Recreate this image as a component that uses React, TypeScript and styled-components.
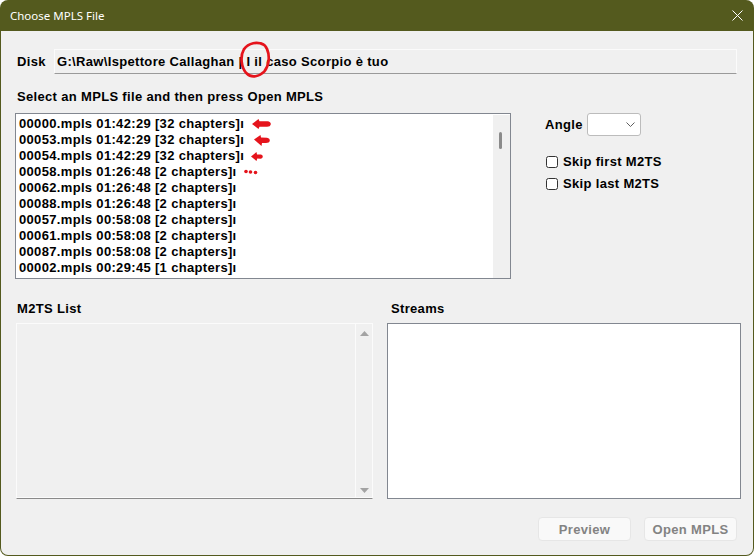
import React from "react";
import styled, { createGlobalStyle } from "styled-components";

const OLIVE = "#545a1e";
const RED = "#e5141c";

const GlobalStyle = createGlobalStyle`
  html, body { margin: 0; padding: 0; background: #ffffff; }
  body { font-family: "Liberation Sans", Arial, sans-serif; }
  * { box-sizing: border-box; }
`;

const Window = styled.div`
  width: 754px;
  height: 556px;
  display: flex;
  flex-direction: column;
  background: ${OLIVE};
  border-radius: 8px;
  overflow: hidden;
  padding: 0 1px 1px 1px;
`;

const TitleBar = styled.div`
  height: 31px;
  flex-shrink: 0;
  display: flex;
  align-items: center;
  justify-content: space-between;
  padding: 0 9px 0 9px;
  color: #ffffff;
  font-family: "Noto Sans", "Liberation Sans", sans-serif;
  font-size: 11.5px;
`;

const CloseIcon = styled.svg`
  width: 11px;
  height: 11px;
  margin-right: 1px;
`;

const Body = styled.div`
  flex: 1;
  background: #f0f0f0;
  border-radius: 0 0 7px 7px;
  padding: 18px 16px 0 14px;
  display: flex;
  flex-direction: column;
  font-family: "Liberation Sans", Arial, sans-serif;
  font-weight: bold;
  font-size: 13px;
  letter-spacing: 0.33px;
  color: #000;
`;

const DiskRow = styled.div`
  position: relative;
  display: flex;
  align-items: center;
  height: 25px;
`;

const DiskLabel = styled.span`
  width: 39px;
  padding-left: 2px;
  line-height: 16px;
`;

const ReadOnlyField = styled.div`
  flex: 1;
  height: 25px;
  display: flex;
  align-items: center;
  padding-left: 2px;
  background: #f0f0f0;
  border: 1px solid #fbfbfb;
  border-bottom: 1px solid #9a9a9a;
  white-space: pre;
`;

const CircleMark = styled.svg`
  position: absolute;
  left: 225px;
  top: -8px;
  width: 31px;
  height: 38px;
  pointer-events: none;
`;

const SectionLabel = styled.div<{ $top: number }>`
  margin-top: ${(p) => p.$top}px;
  padding-left: 2px;
  line-height: 16px;
  height: 16px;
`;

const TopRow = styled.div`
  display: flex;
  margin-top: 8px;
`;

const ListBox = styled.div`
  width: 496px;
  height: 166px;
  flex-shrink: 0;
  border: 1px solid #828790;
  background: #ffffff;
  display: flex;
`;

const ListItems = styled.div`
  flex: 1;
  padding: 2px 0 0 3px;
  overflow: hidden;
`;

const Row = styled.div`
  height: 16px;
  line-height: 16px;
  display: flex;
  align-items: center;
  white-space: nowrap;
`;

const Mark = styled.svg<{ $gap: number }>`
  margin-left: ${(p) => p.$gap}px;
  flex-shrink: 0;
`;

const ScrollTrack = styled.div`
  width: 17px;
  margin: 1px 0 0 0;
  height: 163px;
  background: #f0f0f0;
  padding: 17px 0 0 6px;
`;

const Thumb = styled.div`
  width: 3px;
  height: 17px;
  border-radius: 2px;
  background: #8b8b8b;
`;

const SidePanel = styled.div`
  margin-left: 34px;
  display: flex;
  flex-direction: column;
`;

const AngleRow = styled.div`
  display: flex;
  align-items: center;
  height: 23px;
`;

const AngleLabel = styled.span`
  width: 42px;
  line-height: 16px;
`;

const Combo = styled.div`
  width: 54px;
  height: 23px;
  background: #ffffff;
  border: 1px solid #bcbcbc;
  border-radius: 3px;
  display: flex;
  align-items: center;
  justify-content: flex-end;
  padding-right: 5px;
`;

const CheckList = styled.div`
  display: flex;
  flex-direction: column;
  gap: 6px;
  margin-top: 18px;
`;

const CheckRow = styled.label`
  display: flex;
  align-items: center;
  height: 16px;
  line-height: 16px;
`;

const CheckBox = styled.span`
  width: 12px;
  height: 12px;
  border: 1px solid #333333;
  border-radius: 2.5px;
  background: #ffffff;
  margin: 0 5px 0 1px;
`;

const LabelRow = styled.div`
  display: flex;
  margin-top: 22px;
  height: 16px;
  line-height: 16px;
`;

const LabelCell = styled.span<{ $width: number }>`
  width: ${(p) => p.$width}px;
  padding-left: 2px;
`;

const BottomRow = styled.div`
  display: flex;
  margin-top: 6px;
  gap: 14px;
`;

const DisabledList = styled.div`
  width: 357px;
  height: 176px;
  margin-left: 1px;
  flex-shrink: 0;
  display: flex;
  background: #f0f0f0;
  border: 1px solid #fbfbfb;
  border-bottom: 1px solid #8a8a8a;
  box-shadow: inset 0 -1px 0 #fbfbfb;
`;

const DisabledScroll = styled.div`
  margin-left: auto;
  width: 17px;
  border-left: 1px solid #fbfbfb;
  display: flex;
  flex-direction: column;
  justify-content: space-between;
  align-items: center;
  padding: 7px 0 5px 0;
`;

const StreamsBox = styled.div`
  width: 354px;
  height: 176px;
  flex-shrink: 0;
  background: #ffffff;
  border: 1px solid #828790;
`;

const ButtonRow = styled.div`
  display: flex;
  justify-content: flex-end;
  gap: 13px;
  margin-top: 18px;
`;

const Button = styled.button`
  width: 93px;
  height: 24px;
  background: #f9f9f9;
  border: 1px solid #e6e6e6;
  border-radius: 4px;
  color: #838383;
  font-family: "Liberation Sans", Arial, sans-serif;
  font-weight: bold;
  font-size: 13px;
  letter-spacing: 0.33px;
  padding: 0;
`;

type Entry = { text: string; mark?: "arrow1" | "arrow2" | "arrow3" | "dots" };

const entries: Entry[] = [
  { text: "00000.mpls 01:42:29 [32 chapters]ı", mark: "arrow1" },
  { text: "00053.mpls 01:42:29 [32 chapters]ı", mark: "arrow2" },
  { text: "00054.mpls 01:42:29 [32 chapters]ı", mark: "arrow3" },
  { text: "00058.mpls 01:26:48 [2 chapters]ı", mark: "dots" },
  { text: "00062.mpls 01:26:48 [2 chapters]ı" },
  { text: "00088.mpls 01:26:48 [2 chapters]ı" },
  { text: "00057.mpls 00:58:08 [2 chapters]ı" },
  { text: "00061.mpls 00:58:08 [2 chapters]ı" },
  { text: "00087.mpls 00:58:08 [2 chapters]ı" },
  { text: "00002.mpls 00:29:45 [1 chapters]ı" },
];

const Annotation: React.FC<{ kind: Entry["mark"] }> = ({ kind }) => {
  if (kind === "arrow1")
    return (
      <Mark $gap={8} width="19" height="10" viewBox="0 0 19 10">
        <path d="M0 5 L6.5 0 L7.5 2.3 L15.5 2.3 Q19 2.8 18.8 5.3 Q18.3 7.8 15 7.8 L7.5 7.8 L6.5 10 Z" fill={RED} />
      </Mark>
    );
  if (kind === "arrow2")
    return (
      <Mark $gap={10} width="16" height="11" viewBox="0 0 16 11">
        <path d="M0 4.5 L6.5 0 L7 2.5 L13 2.8 Q16 3.3 15.8 5.8 Q15.3 8 12 8 L8 8 L7.5 11 Z" fill={RED} />
      </Mark>
    );
  if (kind === "arrow3")
    return (
      <Mark $gap={7} width="12" height="9" viewBox="0 0 12 9">
        <path d="M0 4.5 L5.5 0 L6 2.5 L10 2.5 Q12 3 11.8 5 Q11.3 6.8 9.5 6.8 L6.3 6.5 L5.5 9 Z" fill={RED} />
      </Mark>
    );
  if (kind === "dots")
    return (
      <Mark $gap={7} width="14" height="6" viewBox="0 0 14 6">
        <circle cx="2" cy="2.5" r="1.8" fill={RED} />
        <circle cx="6.5" cy="3" r="1.8" fill={RED} />
        <circle cx="11.5" cy="3.5" r="1.8" fill={RED} />
      </Mark>
    );
  return null;
};

const TriUp = () => (
  <svg width="9" height="5" viewBox="0 0 9 5">
    <polygon points="4.5,0 9,5 0,5" fill="#a3a3a3" />
  </svg>
);

const TriDown = () => (
  <svg width="9" height="5" viewBox="0 0 9 5">
    <polygon points="0,0 9,0 4.5,5" fill="#a3a3a3" />
  </svg>
);

export default function App() {
  return (
    <>
      <GlobalStyle />
      <Window>
        <TitleBar>
          <span>Choose MPLS File</span>
          <CloseIcon viewBox="0 0 11 11">
            <path d="M0.5 0.5 L10.5 10.5 M10.5 0.5 L0.5 10.5" stroke="#ffffff" strokeWidth="1" />
          </CloseIcon>
        </TitleBar>
        <Body>
          <DiskRow>
            <DiskLabel>Disk</DiskLabel>
            <ReadOnlyField>{"G:\\Raw\\Ispettore Callaghan | I il caso Scorpio è tuo"}</ReadOnlyField>
            <CircleMark viewBox="0 0 32 38">
              <path
                d="M24 3 C18 0 9 1 4 8 C0 15 1 27 7 33 C12 38 20 36 25 31 C30 25 31 15 28 8 C27 5 25 3 22 2"
                fill="none"
                stroke={RED}
                strokeWidth="2.8"
                strokeLinecap="round"
              />
            </CircleMark>
          </DiskRow>
          <SectionLabel $top={15}>Select an MPLS file and then press Open MPLS</SectionLabel>
          <TopRow>
            <ListBox>
              <ListItems>
                {entries.map((e) => (
                  <Row key={e.text}>
                    <span>{e.text}</span>
                    {e.mark && <Annotation kind={e.mark} />}
                  </Row>
                ))}
              </ListItems>
              <ScrollTrack>
                <Thumb />
              </ScrollTrack>
            </ListBox>
            <SidePanel>
              <AngleRow>
                <AngleLabel>Angle</AngleLabel>
                <Combo>
                  <svg width="9" height="5" viewBox="0 0 9 5">
                    <path d="M0.5 0.5 L4.5 4.5 L8.5 0.5" fill="none" stroke="#5f5f5f" strokeWidth="1" />
                  </svg>
                </Combo>
              </AngleRow>
              <CheckList>
                <CheckRow>
                  <CheckBox />
                  Skip first M2TS
                </CheckRow>
                <CheckRow>
                  <CheckBox />
                  Skip last M2TS
                </CheckRow>
              </CheckList>
            </SidePanel>
          </TopRow>
          <LabelRow>
            <LabelCell $width={374}>M2TS List</LabelCell>
            <LabelCell $width={200}>Streams</LabelCell>
          </LabelRow>
          <BottomRow>
            <DisabledList>
              <DisabledScroll>
                <TriUp />
                <TriDown />
              </DisabledScroll>
            </DisabledList>
            <StreamsBox />
          </BottomRow>
          <ButtonRow>
            <Button disabled>Preview</Button>
            <Button disabled>Open MPLS</Button>
          </ButtonRow>
        </Body>
      </Window>
    </>
  );
}
